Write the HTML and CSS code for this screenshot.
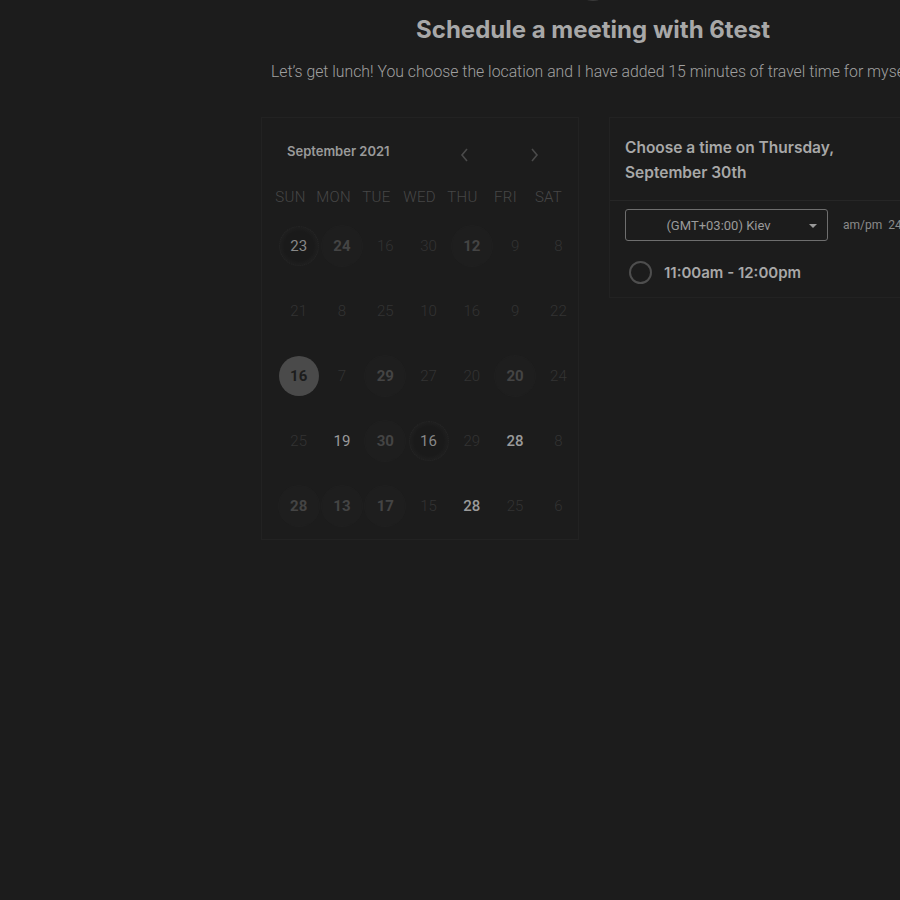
FILE: index.html
```html
<!DOCTYPE html>
<html>
<head>
<meta charset="utf-8">
<link rel="stylesheet" href="styles.css">
</head>
<body>
<div class="page">
  <div class="avatar"></div>
  <h1 class="title">Schedule a meeting with 6test</h1>
  <p class="desc">Let’s get lunch! You choose the location and I have added 15 minutes of travel time for myself</p>
  <div class="main">
    <div class="calendar">
      <div class="cal-head">
        <span class="month">September 2021</span>
        <div class="navs">
          <svg class="chev" width="10" height="16" viewBox="0 0 10 16"><path d="M8 2 L3 8 L8 14" fill="none" stroke="#4a4a4a" stroke-width="1.6"/></svg>
          <svg class="chev" width="10" height="16" viewBox="0 0 10 16"><path d="M2 2 L7 8 L2 14" fill="none" stroke="#4a4a4a" stroke-width="1.6"/></svg>
        </div>
      </div>
      <div class="dows">
        <div class="dow">SUN</div><div class="dow">MON</div><div class="dow">TUE</div><div class="dow">WED</div><div class="dow">THU</div><div class="dow">FRI</div><div class="dow">SAT</div>
      </div>
      <div class="grid">
        <div class="cell"><span class="d tex">23</span></div>
        <div class="cell"><span class="d av">24</span></div>
        <div class="cell"><span class="d dim">16</span></div>
        <div class="cell"><span class="d dim">30</span></div>
        <div class="cell"><span class="d av">12</span></div>
        <div class="cell"><span class="d dim">9</span></div>
        <div class="cell"><span class="d dim">8</span></div>

        <div class="cell"><span class="d dim">21</span></div>
        <div class="cell"><span class="d dim">8</span></div>
        <div class="cell"><span class="d dim">25</span></div>
        <div class="cell"><span class="d dim">10</span></div>
        <div class="cell"><span class="d dim">16</span></div>
        <div class="cell"><span class="d dim">9</span></div>
        <div class="cell"><span class="d dim">22</span></div>

        <div class="cell"><span class="d sel">16</span></div>
        <div class="cell"><span class="d dim">7</span></div>
        <div class="cell"><span class="d av">29</span></div>
        <div class="cell"><span class="d dim">27</span></div>
        <div class="cell"><span class="d dim">20</span></div>
        <div class="cell"><span class="d av">20</span></div>
        <div class="cell"><span class="d dim">24</span></div>

        <div class="cell"><span class="d dim">25</span></div>
        <div class="cell"><span class="d lit">19</span></div>
        <div class="cell"><span class="d av">30</span></div>
        <div class="cell"><span class="d tex">16</span></div>
        <div class="cell"><span class="d dim">29</span></div>
        <div class="cell"><span class="d lit b">28</span></div>
        <div class="cell"><span class="d dim">8</span></div>

        <div class="cell"><span class="d av">28</span></div>
        <div class="cell"><span class="d av">13</span></div>
        <div class="cell"><span class="d av">17</span></div>
        <div class="cell"><span class="d dim">15</span></div>
        <div class="cell"><span class="d lit b">28</span></div>
        <div class="cell"><span class="d dim">25</span></div>
        <div class="cell"><span class="d dim">6</span></div>
      </div>
    </div>
    <div class="times">
      <div class="times-head">Choose a time on Thursday,<br>September 30th</div>
      <div class="times-body">
        <div class="tz-row">
          <div class="select">
            <span>(GMT+03:00) Kiev</span>
            <svg class="caret" width="8" height="4" viewBox="0 0 8 4"><path d="M0 0 L8 0 L4 4 Z" fill="#9a9a9a"/></svg>
          </div>
          <div class="fmt"><span>am/pm</span><span>24h</span></div>
        </div>
        <div class="slot">
          <span class="radio"></span>
          <span class="slot-text">11:00am - 12:00pm</span>
        </div>
      </div>
    </div>
  </div>
</div>
</body>
</html>
```
FILE: styles.css
```css
html, body {
  margin: 0;
  padding: 0;
  background: #1c1c1c;
  overflow: hidden;
  width: 900px;
  height: 900px;
}
.page {
  width: 664px;
  margin-left: 261px;
  display: flex;
  flex-direction: column;
  align-items: center;
  font-family: "Roboto", "Liberation Sans", sans-serif;
}
.avatar {
  width: 40px;
  height: 40px;
  border-radius: 50%;
  border: 1px solid #3a3a3a;
  margin-top: -39px;
  box-sizing: border-box;
}
.title {
  margin: 14px 0 0;
  font-family: "Inter", sans-serif;
  font-weight: 700;
  font-size: 24px;
  line-height: 30px;
  color: #a8a8a8;
  white-space: nowrap;
}
.desc {
  margin: 17px 0 0;
  font-family: "Roboto", sans-serif;
  font-weight: 300;
  font-size: 15.8px;
  line-height: 20px;
  color: #a0a0a0;
  white-space: nowrap;
  width: 644px;
}
.main {
  margin-top: 35px;
  width: 664px;
  display: flex;
  gap: 30px;
  align-items: flex-start;
}
.calendar {
  width: 318px;
  height: 423px;
  box-sizing: border-box;
  border: 1px solid #222;
  padding: 13px 8px 0 7px;
}
.cal-head {
  height: 40px;
  display: flex;
  align-items: center;
  justify-content: space-between;
  padding-left: 18px;
  margin-bottom: 10px;
}
.month {
  font-family: "Inter", sans-serif;
  font-weight: 600;
  font-size: 13px;
  color: #9a9a9a;
  margin-top: -1px;
}
.navs {
  display: flex;
  gap: 61px;
  margin-right: 30px;
  margin-top: 8px;
}
.chev { display: block; }
.dows {
  display: grid;
  grid-template-columns: repeat(7, 43px);
  height: 32px;
}
.dow {
  display: flex;
  align-items: center;
  justify-content: center;
  font-size: 15px;
  font-weight: 300;
  color: #474747;
  letter-spacing: 0.3px;
}
.grid {
  display: grid;
  grid-template-columns: repeat(7, 43.3px);
  grid-template-rows: repeat(5, 65px);
  margin-left: 8px;
}
.cell {
  display: flex;
  align-items: center;
  justify-content: center;
}
.d {
  width: 40px;
  height: 40px;
  border-radius: 50%;
  display: flex;
  align-items: center;
  justify-content: center;
  font-size: 15px;
  font-weight: 300;
}
.dim { color: #333; }
.av {
  color: #444;
  font-weight: 700;
  background: #1e1e1e;
  box-shadow: 0 0 0 1px #1f1f1f;
}
.lit { color: #9a9a9a; font-weight: 400; }
.lit.b { font-weight: 500; }
.sel {
  background: #4a4a4a;
  color: #1c1c1c;
  font-weight: 700;
}
.tex {
  color: #888;
  font-weight: 400;
  background: radial-gradient(circle, #1a1a1a 55%, #202020 75%, #1c1c1c 100%);
  border: 1px dotted #262626;
  box-sizing: border-box;
}
.times {
  width: 316px;
  flex: none;
  border: 1px solid #222;
  box-sizing: border-box;
}
.times-head {
  font-family: "Inter", sans-serif;
  font-weight: 600;
  font-size: 15.5px;
  line-height: 25px;
  color: #a8a8a8;
  padding: 17px 15px 15px;
  border-bottom: 1px solid #262626;
}
.times-body {
  padding: 8px 0 5px 15px;
}
.tz-row {
  display: flex;
  align-items: center;
  gap: 15px;
}
.select {
  width: 203px;
  height: 32px;
  box-sizing: border-box;
  border: 1px solid #6e6e6e;
  border-radius: 3px;
  display: flex;
  align-items: center;
  justify-content: center;
  position: relative;
  font-size: 13px;
  color: #9a9a9a;
}
.select span { margin-left: -16px; }
.caret {
  position: absolute;
  right: 10px;
  top: 14px;
}
.fmt {
  display: flex;
  gap: 6px;
  font-size: 12px;
  color: #8a8a8a;
  white-space: nowrap;
}
.slot {
  display: flex;
  align-items: center;
  margin-top: 11px;
  height: 40px;
}
.radio {
  width: 23px;
  height: 23px;
  box-sizing: border-box;
  border-radius: 50%;
  border: 2px solid #4e4e4e;
  margin-left: 4px;
}
.slot-text {
  margin-left: 12px;
  font-family: "Inter", sans-serif;
  font-weight: 600;
  font-size: 15px;
  color: #a8a8a8;
}
```
